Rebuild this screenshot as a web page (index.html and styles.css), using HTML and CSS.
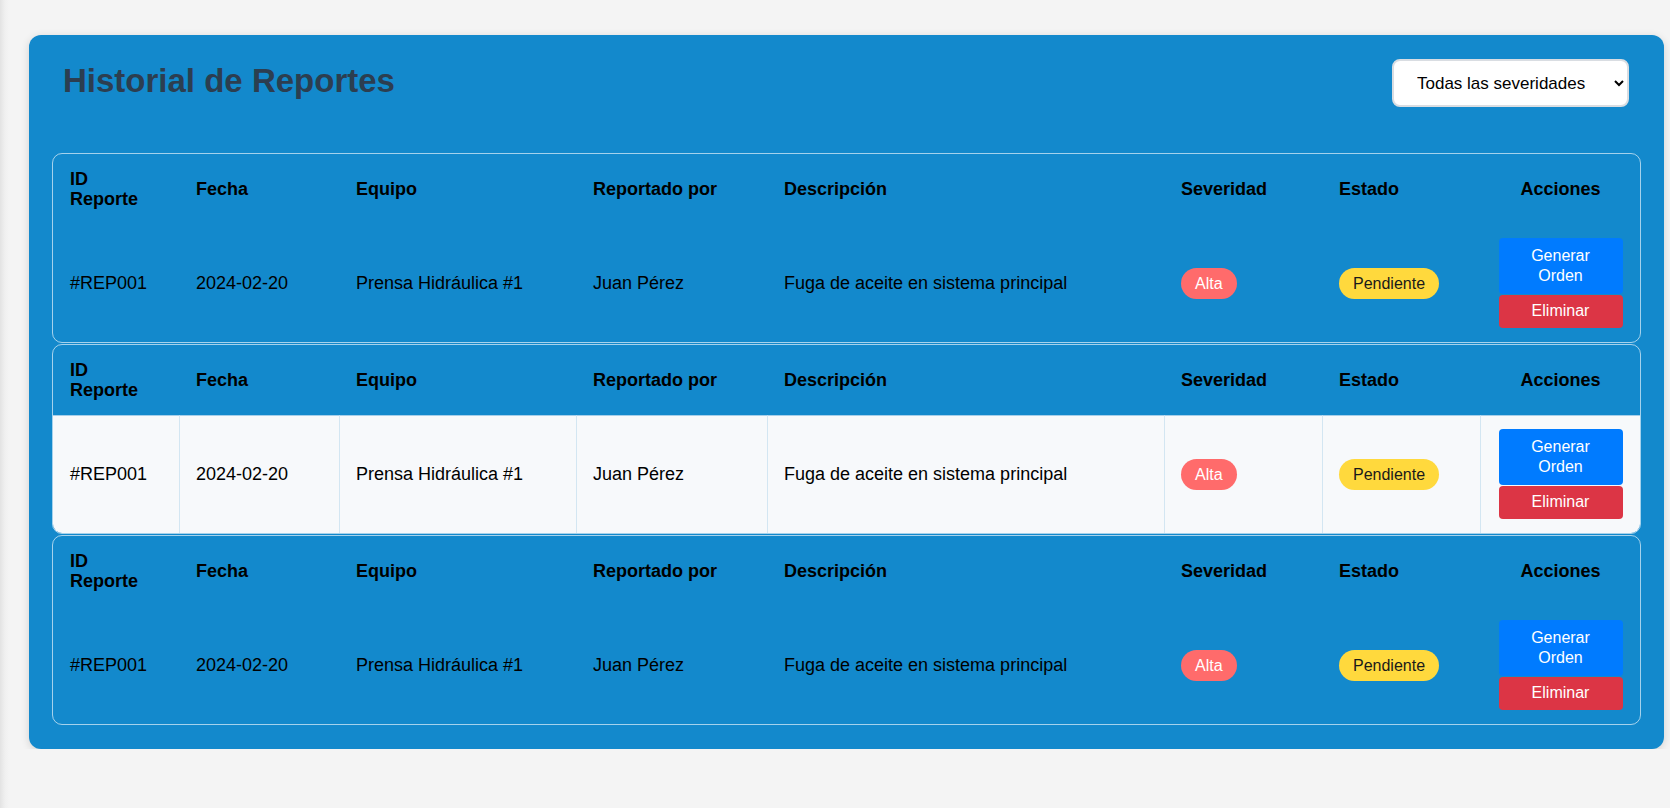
FILE: index.html
```html
<!DOCTYPE html>
<html lang="es">
<head>
<meta charset="utf-8">
<title>Historial de Reportes</title>
<link rel="stylesheet" href="styles.css">
</head>
<body>
<section class="panel">
  <header class="panel-header">
    <h2 class="title">Historial de Reportes</h2>
    <select class="filter">
      <option>Todas las severidades</option>
      <option>Alta</option>
      <option>Media</option>
      <option>Baja</option>
    </select>
  </header>

  <table class="report">
    <colgroup>
      <col class="w-id"><col class="w-date"><col class="w-equip"><col class="w-by"><col class="w-desc"><col class="w-sev"><col class="w-state"><col class="w-act">
    </colgroup>
    <thead>
      <tr>
        <th><span class="wrap">ID Reporte</span></th><th>Fecha</th><th>Equipo</th><th>Reportado por</th><th>Descripción</th><th>Severidad</th><th>Estado</th><th class="center">Acciones</th>
      </tr>
    </thead>
    <tbody>
      <tr>
        <td>#REP001</td><td>2024-02-20</td><td>Prensa Hidráulica #1</td><td>Juan Pérez</td><td>Fuga de aceite en sistema principal</td>
        <td><span class="pill pill-high">Alta</span></td>
        <td><span class="pill pill-pending">Pendiente</span></td>
        <td class="center"><div class="actions"><button class="btn btn-primary">Generar Orden</button><button class="btn btn-danger">Eliminar</button></div></td>
      </tr>
    </tbody>
  </table>

  <table class="report report-active">
    <colgroup>
      <col class="w-id"><col class="w-date"><col class="w-equip"><col class="w-by"><col class="w-desc"><col class="w-sev"><col class="w-state"><col class="w-act">
    </colgroup>
    <thead>
      <tr>
        <th><span class="wrap">ID Reporte</span></th><th>Fecha</th><th>Equipo</th><th>Reportado por</th><th>Descripción</th><th>Severidad</th><th>Estado</th><th class="center">Acciones</th>
      </tr>
    </thead>
    <tbody>
      <tr>
        <td>#REP001</td><td>2024-02-20</td><td>Prensa Hidráulica #1</td><td>Juan Pérez</td><td>Fuga de aceite en sistema principal</td>
        <td><span class="pill pill-high">Alta</span></td>
        <td><span class="pill pill-pending">Pendiente</span></td>
        <td class="center"><div class="actions"><button class="btn btn-primary">Generar Orden</button><button class="btn btn-danger">Eliminar</button></div></td>
      </tr>
    </tbody>
  </table>

  <table class="report">
    <colgroup>
      <col class="w-id"><col class="w-date"><col class="w-equip"><col class="w-by"><col class="w-desc"><col class="w-sev"><col class="w-state"><col class="w-act">
    </colgroup>
    <thead>
      <tr>
        <th><span class="wrap">ID Reporte</span></th><th>Fecha</th><th>Equipo</th><th>Reportado por</th><th>Descripción</th><th>Severidad</th><th>Estado</th><th class="center">Acciones</th>
      </tr>
    </thead>
    <tbody>
      <tr>
        <td>#REP001</td><td>2024-02-20</td><td>Prensa Hidráulica #1</td><td>Juan Pérez</td><td>Fuga de aceite en sistema principal</td>
        <td><span class="pill pill-high">Alta</span></td>
        <td><span class="pill pill-pending">Pendiente</span></td>
        <td class="center"><div class="actions"><button class="btn btn-primary">Generar Orden</button><button class="btn btn-danger">Eliminar</button></div></td>
      </tr>
    </tbody>
  </table>
</section>
</body>
</html>
```

FILE: styles.css
```css
* {
  box-sizing: border-box;
}

html {
  background: linear-gradient(to right, #e3e3e3 0, #f0f0f0 5px, #f4f4f4 9px, #f4f4f4 100%);
}

body {
  margin: 0;
  font-family: "Liberation Sans", Arial, sans-serif;
  color: #000;
}

.panel {
  margin: 35px 6px 0 29px;
  padding: 24px 23px 23px;
  background: #1389cc;
  border-radius: 12px;
  box-shadow: 0 2px 8px rgba(0, 0, 0, 0.14);
}

.panel-header {
  display: flex;
  justify-content: space-between;
  align-items: flex-start;
  padding: 0 12px 0 11px;
  margin-bottom: 46px;
}

.title {
  margin: 2px 0 0;
  font-size: 33px;
  line-height: 40px;
  font-weight: bold;
  color: #2c3e50;
}

.filter {
  width: 237px;
  height: 48px;
  padding: 0 6px 0 19px;
  font-family: inherit;
  font-size: 17px;
  color: #000;
  background: #fff;
  border: 2px solid #d9dde2;
  border-radius: 8px;
}

.report {
  width: 100%;
  table-layout: fixed;
  border-collapse: separate;
  border-spacing: 0;
  border: 1px solid rgba(255, 255, 255, 0.62);
  border-radius: 10px;
  margin-bottom: 1px;
  font-size: 18px;
  line-height: 20px;
}

.w-id { width: 126px; }
.w-date { width: 160px; }
.w-equip { width: 237px; }
.w-by { width: 191px; }
.w-desc { width: 397px; }
.w-sev { width: 158px; }
.w-state { width: 158px; }
.w-act { width: 160px; }

.report th {
  padding: 15px 16px 15px 17px;
  text-align: left;
  font-weight: bold;
  vertical-align: middle;
}

.wrap {
  display: block;
  width: min-content;
}

.report td {
  padding: 14px 16px 14px 17px;
  vertical-align: middle;
  font-weight: normal;
}

.report th + th,
.report td + td {
  border-left: 1px solid transparent;
  padding-left: 16px;
}

.report .center {
  text-align: center;
}

.report-active td {
  background: #f7f9fb;
  border-top: 1px solid #a6cfea;
  padding-top: 13px;
}

.report-active td + td {
  border-left-color: #d3e6f2;
}

.report-active tr:last-child td:first-child {
  border-bottom-left-radius: 9px;
}

.report-active tr:last-child td:last-child {
  border-bottom-right-radius: 9px;
}

.pill {
  display: inline-block;
  padding: 6px 14px;
  border-radius: 999px;
  font-size: 16px;
  line-height: 19px;
}

.pill-high {
  background: #ff6b6b;
  color: #fff;
}

.pill-pending {
  background: #ffd93d;
  color: #1a1a1a;
}

.actions {
  display: flex;
  flex-direction: column;
  align-items: center;
  gap: 1px;
}

.btn {
  width: 124px;
  border: 0;
  border-radius: 4px;
  font-family: inherit;
  font-size: 16px;
  line-height: 20px;
  color: #fff;
  cursor: pointer;
}

.btn-primary {
  padding: 8px 12px;
  background: #007bff;
}

.btn-danger {
  padding: 6px 12px 7px;
  background: #dc3545;
}
```
